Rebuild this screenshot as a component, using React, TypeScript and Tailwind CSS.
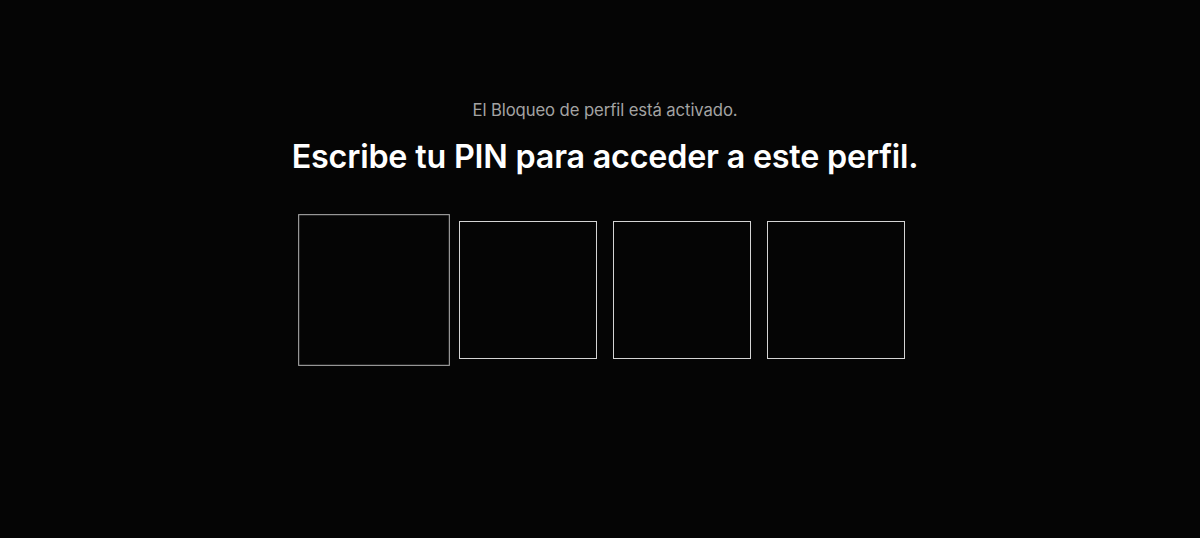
import { useState } from "react";

const PIN_LENGTH = 4;

const App = () => {
	const [focused] = useState(0);

	return (
		<div className="flex h-[538px] w-full flex-col items-center bg-[#050505] pl-[10px] pt-[99px] font-['Inter',sans-serif]">
			<p className="text-[16.7px] leading-[22px] tracking-[-0.1px] text-[#a3a3a3]">
				El Bloqueo de perfil está activado.
			</p>
			<h1 className="mt-[17px] text-[32.3px] font-semibold leading-[38px] tracking-[-0.2px] text-white">
				Escribe tu PIN para acceder a este perfil.
			</h1>
			<div className="mt-[45px] flex gap-4">
				{Array.from({ length: PIN_LENGTH }).map((_, i) => (
					<input
						key={i}
						type="password"
						maxLength={1}
						aria-label={`Dígito ${i + 1}`}
						className={
							i === focused
								? "h-[138px] w-[138px] scale-110 border-[1.8px] border-[#a6a6a6] bg-transparent text-center text-6xl text-white outline-none"
								: "h-[138px] w-[138px] border-[1.5px] border-[#d4d4d4] bg-transparent text-center text-6xl text-white outline-none"
						}
					/>
				))}
			</div>
		</div>
	);
};

export default App;
